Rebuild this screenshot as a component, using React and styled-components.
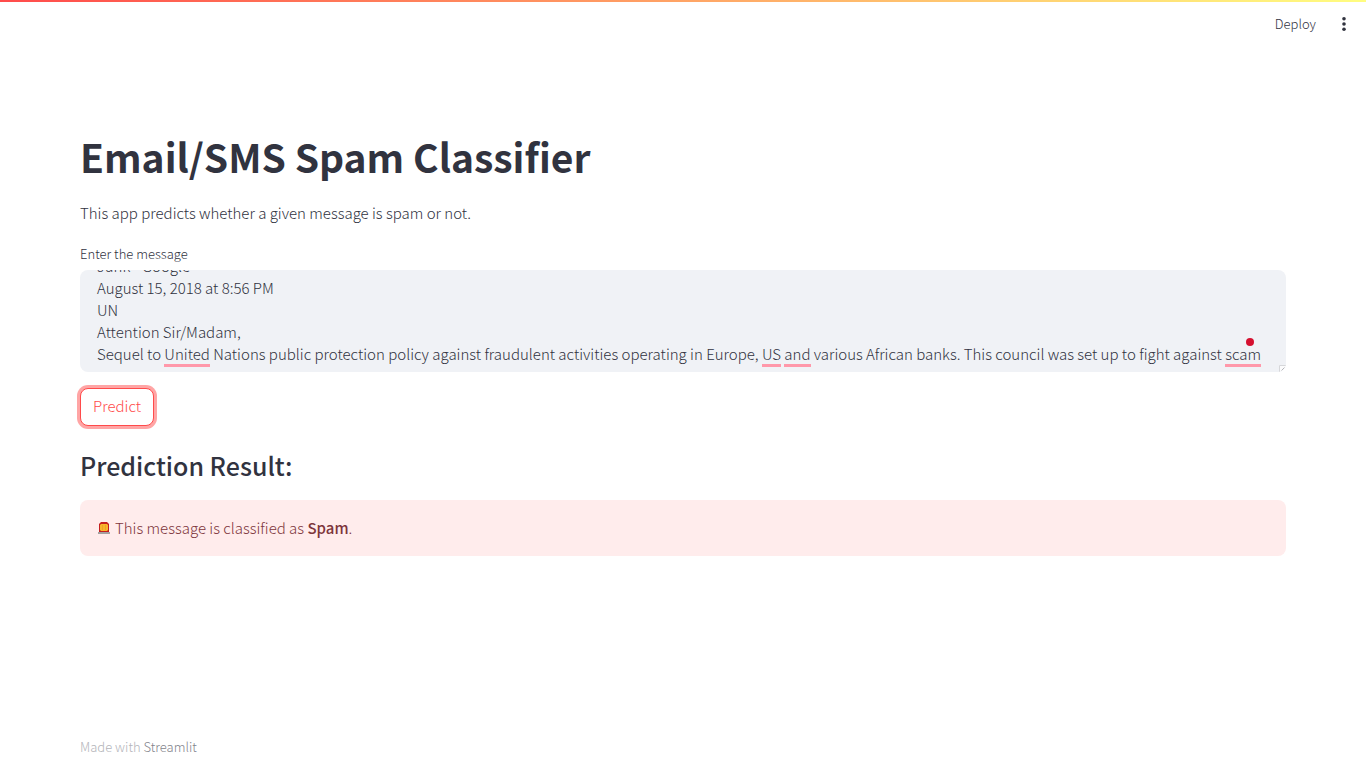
import React, { useLayoutEffect, useRef, useState } from "react";
import styled, { createGlobalStyle } from "styled-components";

const GlobalStyle = createGlobalStyle`
  *, *::before, *::after { box-sizing: border-box; }
  body {
    margin: 0;
    background: #ffffff;
    color: #31333f;
    font-family: "Noto Sans CJK SC", "Liberation Sans", sans-serif;
    font-size: 15px;
    font-weight: 300;
    line-height: 26px;
  }
`;

const Page = styled.div`
  min-height: 100vh;
  display: flex;
  flex-direction: column;
`;

const Decoration = styled.div`
  height: 2px;
  background: linear-gradient(90deg, #ff4b4b, #fffd80);
`;

const Toolbar = styled.header`
  display: flex;
  justify-content: flex-end;
  align-items: center;
  gap: 16px;
  height: 44px;
  padding-right: 12px;
`;

const ToolbarButton = styled.button`
  display: flex;
  align-items: center;
  border: 0;
  background: transparent;
  padding: 0 ${(p) => (p.$icon ? "0" : "2px")};
  color: inherit;
  font-family: inherit;
  font-size: 13px;
  font-weight: inherit;
  line-height: 20px;
  cursor: pointer;
`;

const Main = styled.main`
  flex: 1;
  padding: 81px 80px 0;
`;

const Title = styled.h1`
  margin: 0;
  font-size: 39px;
  font-weight: 700;
  line-height: 58px;
`;

const Intro = styled.p`
  margin: 15px 0 14px;
`;

const Label = styled.label`
  display: block;
  margin-bottom: 2px;
  font-size: 13px;
  line-height: 28px;
`;

const Field = styled.div`
  position: relative;
  display: grid;
  height: 102px;
  border-radius: 8px;
  background: #f0f2f6;
  overflow: hidden;
`;

const MessageInput = styled.textarea`
  grid-area: 1 / 1;
  width: 100%;
  height: 100%;
  margin: 0;
  border: 0;
  outline: 0;
  padding: 16px 17px 7px;
  background: transparent;
  color: inherit;
  font-family: inherit;
  font-size: 15px;
  font-weight: inherit;
  line-height: 22px;
  resize: none;
  scrollbar-width: none;
`;

const Marks = styled.div`
  grid-area: 1 / 1;
  min-height: 0;
  padding: 16px 17px 7px;
  overflow: hidden;
  visibility: hidden;
  line-height: 22px;
  white-space: pre-wrap;
`;

const Flagged = styled.span`
  position: relative;
  display: inline-block;

  &::after {
    content: "";
    position: absolute;
    left: 0;
    right: 0;
    bottom: -2px;
    height: 3px;
    background: #ff98aa;
    visibility: visible;
  }
`;

const StatusDot = styled.span`
  position: absolute;
  right: 32px;
  bottom: 26px;
  width: 8px;
  height: 8px;
  border-radius: 50%;
  background: #d5102f;
`;

const Grip = styled.svg`
  position: absolute;
  right: 0;
  bottom: 0;
  width: 7px;
  height: 7px;
`;

const PredictButton = styled.button`
  display: block;
  margin: 16px 0 22px;
  height: 38px;
  padding: 0 12px 2px;
  border: 1px solid #ff4b4b;
  border-radius: 8px;
  box-shadow: 0 0 0 3px rgba(255, 75, 75, 0.5);
  background: #ffffff;
  color: #ff4b4b;
  font-family: inherit;
  font-size: 15px;
  font-weight: inherit;
  line-height: 26px;
  cursor: pointer;
`;

const ResultHeading = styled.h2`
  margin: 0 0 18px;
  font-size: 25px;
  font-weight: 500;
  line-height: 34px;
`;

const Alert = styled.div`
  display: flex;
  align-items: center;
  gap: 4px;
  padding: 15px 17px;
  border-radius: 8px;
  background: #ffecec;
  color: #7d353b;
`;

const Strong = styled.strong`
  font-weight: 500;
`;

const Footer = styled.footer`
  padding: 8px 80px;
  color: #b4b5ba;
  font-size: 13px;
  line-height: 26px;
`;

const FooterLink = styled.a`
  color: #83848c;
  text-decoration: none;
`;

const MESSAGE = `Junk - Google
August 15, 2018 at 8:56 PM
UN
Attention Sir/Madam,
Sequel to United Nations public protection policy against fraudulent activities operating in Europe, US and various African banks. This council was set up to fight against scam`;

const FLAGGED_WORDS = /\b(United|US|and|scam)\b/;

function MenuIcon() {
  return (
    <svg width="20" height="20" viewBox="0 0 20 20" fill="currentColor" aria-hidden="true">
      <circle cx="10" cy="4.800" r="1.800" />
      <circle cx="10" cy="10" r="1.800" />
      <circle cx="10" cy="15.200" r="1.800" />
    </svg>
  );
}

function SirenIcon() {
  return (
    <svg width="14" height="14" viewBox="0 0 14 14" aria-hidden="true">
      <path d="M2 11V3L4 1h6l2 2v8z" fill="#c41e1e" />
      <path d="M4 3h6l1 1v5l-1 1H4L3 9V4z" fill="#f8b42c" />
      <path d="M5.500 4v5M8.500 4v5" stroke="#f0a024" strokeWidth="1" />
      <path d="M1 11h12v2H1z" fill="#a5a0a0" />
    </svg>
  );
}

function MessageField() {
  const [message, setMessage] = useState(MESSAGE);
  const input = useRef(null);
  const marks = useRef(null);

  const syncScroll = () => {
    marks.current.scrollTop = input.current.scrollTop;
  };

  useLayoutEffect(() => {
    input.current.scrollTop = input.current.scrollHeight;
    syncScroll();
  }, []);

  return (
    <Field>
      <Marks ref={marks} aria-hidden="true">
        {message.split(FLAGGED_WORDS).map((part, i) =>
          i % 2 ? <Flagged key={i}>{part}</Flagged> : part
        )}
      </Marks>
      <MessageInput
        id="message"
        ref={input}
        value={message}
        spellCheck={false}
        onChange={(e) => setMessage(e.target.value)}
        onScroll={syncScroll}
      />
      <StatusDot />
      <Grip viewBox="0 0 7 7" aria-hidden="true">
        <path d="M0 0h7v7H0z" fill="#fbfbfc" />
        <path d="M0.500 7V0.500H7" fill="none" stroke="#d6d7da" />
        <path d="M2.500 5.500l3-3" stroke="#b5b6ba" />
      </Grip>
    </Field>
  );
}

export default function App() {
  return (
    <Page>
      <GlobalStyle />
      <Decoration />
      <Toolbar>
        <ToolbarButton type="button">Deploy</ToolbarButton>
        <ToolbarButton type="button" $icon aria-label="Main menu">
          <MenuIcon />
        </ToolbarButton>
      </Toolbar>
      <Main>
        <Title>Email/SMS Spam Classifier</Title>
        <Intro>This app predicts whether a given message is spam or not.</Intro>
        <Label htmlFor="message">Enter the message</Label>
        <MessageField />
        <PredictButton type="button">Predict</PredictButton>
        <ResultHeading>Prediction Result:</ResultHeading>
        <Alert role="alert">
          <SirenIcon />
          <span>
            This message is classified as <Strong>Spam</Strong>.
          </span>
        </Alert>
      </Main>
      <Footer>
        Made with <FooterLink href="#streamlit">Streamlit</FooterLink>
      </Footer>
    </Page>
  );
}
